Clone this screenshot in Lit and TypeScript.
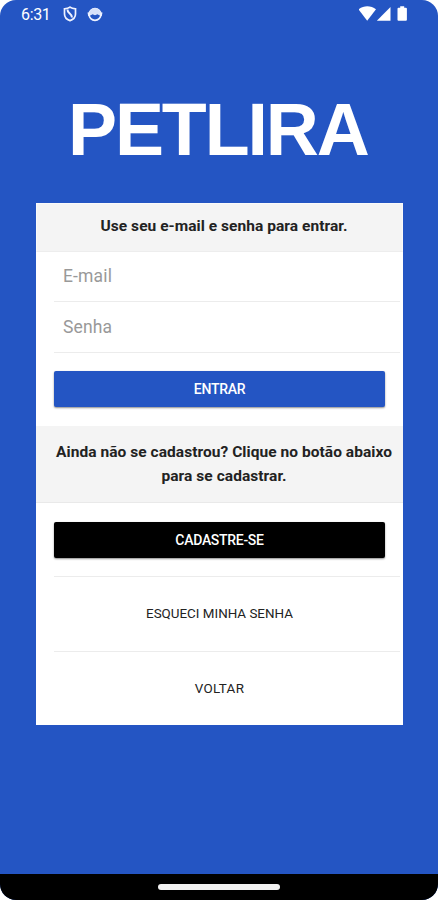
import { LitElement, html, css } from "lit";
import { customElement } from "lit/decorators.js";

@customElement("status-bar")
class StatusBar extends LitElement {
  static styles = css`
    :host { display: flex; justify-content: space-between; height: 28px; color: #fff; }
    .left { display: flex; padding-left: 21px; }
    .time { font-size: 16px; line-height: 30px; width: 41px; letter-spacing: -0.35px; }
    .shield { margin: 6px 0 0 1px; }
    .face { margin: 7px 0 0 10px; }
    .right { display: flex; padding: 5px 29px 0 0; }
    svg { display: block; }
  `;
  render() {
    return html`
      <div class="left">
        <span class="time">6:31</span>
        <svg class="shield" width="14" height="16" viewBox="0 0 14 16" fill="none" stroke="#eef2ff" stroke-width="1.7">
          <path d="M7 1.200C5.500 2.400 3.500 2.800 1.500 2.800V8c0 3 2.200 5.500 5.500 6.600C10.300 13.500 12.500 11 12.500 8V2.800C10.500 2.800 8.500 2.400 7 1.200z" />
          <path d="M4.500 3.500C4.200 7.500 8.800 6.800 9 11.500" stroke-width="2" />
        </svg>
        <svg class="face" width="16" height="15" viewBox="0 0 16 15">
          <circle cx="8" cy="7.500" r="5.900" fill="none" stroke="#eef2ff" stroke-width="1.700" />
          <path d="M2 7C2.500 3 5 1.200 8 1.200s5.500 1.800 6 5.800L12.500 8.500 10.500 7.300 8 8.300 5.500 7.300 3.500 8.500z" fill="#d7e1fa" />
          <path d="M.5 5.500h2.300v3.500H1.200zM13.200 5.500h2.300L14.800 9h-1.600z" fill="#eef2ff" />
        </svg>
      </div>
      <svg class="right" width="50" height="18" viewBox="0 0 50 18" fill="#fff">
        <path d="M-.5 4.300C4.500.3 12 .3 17 4.300L8.200 15.700z" />
        <path d="M17.800 15.700 31.500 2v13.700z" />
        <path d="M41.200 1.200h4v1.600h1.700q1 0 1 1v10.900q0 1-1 1h-7.400q-1 0-1-1V3.800q0-1 1-1h1.700z" />
      </svg>
    `;
  }
}

@customElement("login-card")
class LoginCard extends LitElement {
  static styles = css`
    :host { display: block; width: 367px; height: 522px; background: #fff; }
    * { box-sizing: border-box; }
    .head { height: 49px; background: #f4f4f4; border: 1px solid #fafafa; border-bottom-color: #ededed;
      font-weight: 700; font-size: 15.5px; letter-spacing: 0.05px; line-height: 45px; text-align: center; color: #222; padding-left: 9px; }
    .info { height: 77px; background: #f4f4f4; border-bottom: 1px solid #e9e9e9; margin-top: 19px;
      font-weight: 700; font-size: 15.5px; letter-spacing: 0.05px; line-height: 24px; text-align: center; color: #222; padding: 14px 0 0 9px; white-space: nowrap; }
    .field { display: block; margin-left: 18px; width: 346px; border: 0; border-bottom: 1px solid #ececec; background: none;
      outline: none; height: 50px; padding: 0 0 2px 9px; font: 17.500px Roboto, sans-serif; letter-spacing: 0.15px; }
    .field.second { height: 51px; padding-bottom: 0; }
    .field::placeholder { color: #999; opacity: 1; }
    .btn { display: block; width: 331px; height: 36px; border: 0; border-radius: 2px; padding: 0;
      margin: 18px 0 0 18px; color: #fff; background: #2455c3; font: 500 14px Roboto, sans-serif; letter-spacing: -0.3px;
      box-shadow: 0 1px 2px rgba(0,0,0,.45); }
    .btn.dark { background: #000; margin-top: 19px; padding-bottom: 1px; }
    .link { display: flex; align-items: center; justify-content: center; margin-left: 18px; width: 346px;
      height: 75px; border-top: 1px solid #ececec; font-size: 13.4px; color: #222; padding: 0 15px 2px 0; }
    .first { margin-top: 18px; }
    .back { letter-spacing: 0.35px; }
  `;
  render() {
    return html`
      <div class="head">Use seu e-mail e senha para entrar.</div>
      <input class="field" placeholder="E-mail" />
      <input class="field second" type="password" placeholder="Senha" />
      <button class="btn">ENTRAR</button>
      <div class="info">Ainda não se cadastrou? Clique no botão abaixo<br />para se cadastrar.</div>
      <button class="btn dark">CADASTRE-SE</button>
      <div class="link first">ESQUECI MINHA SENHA</div>
      <div class="link back">VOLTAR</div>
    `;
  }
}

@customElement("app-root")
class AppRoot extends LitElement {
  static styles = css`
    :host { display: block; background: #fff; font-family: Roboto, sans-serif; }
    .screen { display: flex; flex-direction: column; width: 438px; height: 900px; background: #2455c3; border-radius: 16px; overflow: hidden; }
    .logo { margin: 63px 0 0; height: 112px; padding-left: 68px; font: 700 73.5px/78px "Liberation Sans", Arial, sans-serif; letter-spacing: -2.1px; color: #fff; white-space: nowrap; }
    login-card { margin-left: 36px; }
    .nav { margin-top: auto; height: 26px; background: #000; display: flex; justify-content: center; padding-top: 10px; box-sizing: border-box; }
    .pill { width: 122px; height: 6px; border-radius: 3px; background: #f2f2f2; }
  `;
  render() {
    return html`
      <div class="screen">
        <status-bar></status-bar>
        <h1 class="logo">PETLIRA</h1>
        <login-card></login-card>
        <div class="nav"><div class="pill"></div></div>
      </div>
    `;
  }
}
